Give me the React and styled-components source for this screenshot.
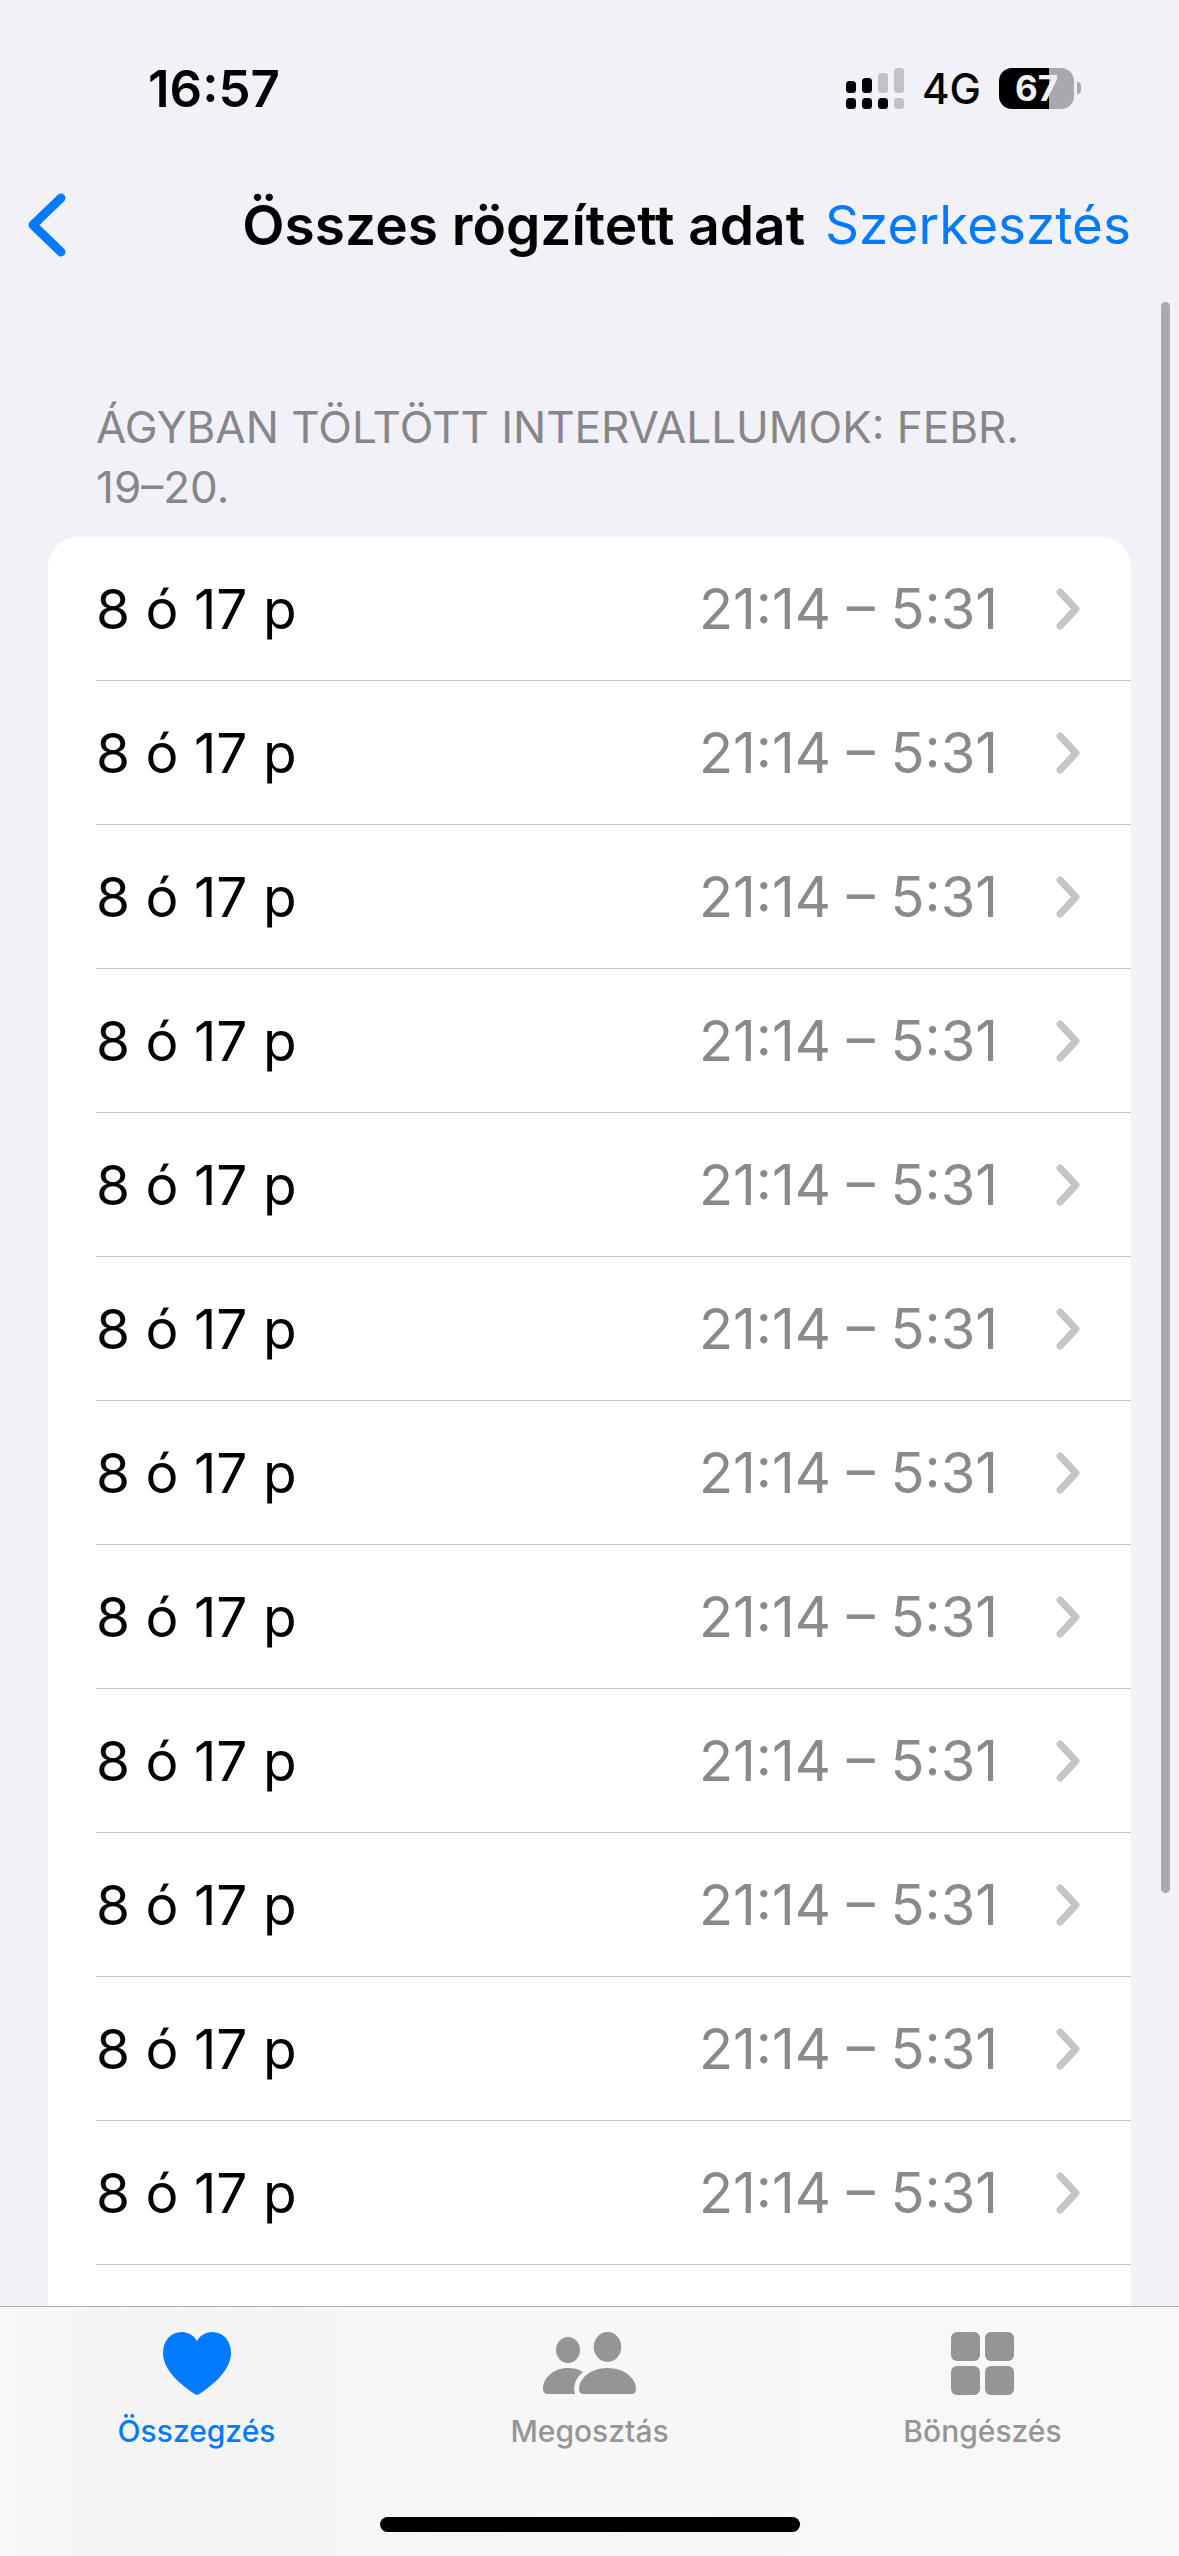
import styled, { createGlobalStyle } from 'styled-components';

const intervals = Array.from({ length: 12 }, (_, i) => ({
  id: i,
  duration: '8 ó 17 p',
  range: '21:14 – 5:31',
}));

const tabs = [
  { label: 'Összegzés', icon: HeartIcon, active: true },
  { label: 'Megosztás', icon: PeopleIcon },
  { label: 'Böngészés', icon: GridIcon },
];

export default function App() {
  return (
    <>
      <GlobalStyle />
      <Screen>
        <StatusBar>
          <Time>16:57</Time>
          <StatusIcons>
            <SignalIcon />
            <Network>4G</Network>
            <Battery>
              <BatteryBody>67</BatteryBody>
              <BatteryTip />
            </Battery>
          </StatusIcons>
        </StatusBar>

        <NavBar>
          <BackButton type="button" aria-label="Vissza">
            <BackIcon />
          </BackButton>
          <Title>Összes rögzített adat</Title>
          <EditButton type="button">Szerkesztés</EditButton>
        </NavBar>

        <Content>
          <SectionTitle>
            Ágyban töltött intervallumok: febr. <Days>19–20.</Days>
          </SectionTitle>
          <List>
            {intervals.map((interval) => (
              <Item key={interval.id}>
                <Row href="#">
                  <Duration>{interval.duration}</Duration>
                  <Range>{interval.range}</Range>
                  <ChevronIcon />
                </Row>
              </Item>
            ))}
          </List>
          <ScrollIndicator />
        </Content>

        <TabBar>
          <Tabs>
            {tabs.map(({ label, icon: Icon, active }) => (
              <Tab key={label} href="#" $active={active}>
                <Icon />
                {label}
              </Tab>
            ))}
          </Tabs>
          <HomeIndicator />
        </TabBar>
      </Screen>
    </>
  );
}

function SignalIcon() {
  return (
    <svg width="58" height="41" viewBox="0 0 58 41" aria-hidden="true">
      <g fill="#000">
        <rect x="0" y="13" width="10" height="12" rx="3.5" />
        <rect x="16" y="10" width="10" height="15" rx="3.5" />
        <rect x="0" y="30" width="10" height="11" rx="3.5" />
        <rect x="16" y="30" width="10" height="11" rx="3.5" />
        <rect x="32" y="30" width="10" height="11" rx="3.5" />
      </g>
      <g fill="#c2c1c7">
        <rect x="32" y="5" width="10" height="20" rx="3.5" />
        <rect x="48" y="0" width="10" height="25" rx="3.5" />
        <rect x="48" y="30" width="10" height="11" rx="3.5" />
      </g>
    </svg>
  );
}

function BackIcon() {
  return (
    <svg width="38" height="64" viewBox="0 0 38 64" fill="none" aria-hidden="true">
      <path d="M33 5 L5 32 L33 59" stroke="currentColor" strokeWidth="9" strokeLinecap="round" strokeLinejoin="round" />
    </svg>
  );
}

function ChevronIcon() {
  return (
    <svg width="24" height="42" viewBox="0 0 24 42" fill="none" aria-hidden="true">
      <path d="M4 4 L20 21 L4 38" stroke="#c5c5c7" strokeWidth="7" strokeLinecap="round" strokeLinejoin="round" />
    </svg>
  );
}

function HeartIcon() {
  return (
    <svg width="68" height="63" viewBox="0 0 68 63" fill="currentColor" aria-hidden="true">
      <path d="M34 63 C33 63 32 62 31 61.500 C12 49 0 35 0 21 C0 8.500 8 0 19 0 C25.500 0 31 3.500 34 9 C37 3.500 42.500 0 49 0 C60 0 68 8.500 68 21 C68 35 56 49 37 61.500 C36 62 35 63 34 63 Z" />
    </svg>
  );
}

function PeopleIcon() {
  return (
    <svg width="94" height="63" viewBox="0 0 94 63" fill="currentColor" aria-hidden="true">
      <ellipse cx="25" cy="18" rx="12" ry="13" />
      <ellipse cx="64.500" cy="15" rx="13.800" ry="15" />
      <path d="M5 62 C1.500 62 0 60 0 56.500 C0 46.500 10 36 25 36 C31 36 36 37.500 40 40 C32 46.500 30 54.500 32 62 Z" />
      <path d="M41 62 C37.500 62 36 60 36 57 C36 47 47 36 64.500 36 C82 36 93 47 93 57 C93 60 91.500 62 88 62 Z" />
    </svg>
  );
}

function GridIcon() {
  return (
    <svg width="63" height="63" viewBox="0 0 63 63" fill="currentColor" aria-hidden="true">
      <rect x="0" y="0" width="29" height="29" rx="6" />
      <rect x="34" y="0" width="29" height="29" rx="6" />
      <rect x="0" y="34" width="29" height="29" rx="6" />
      <rect x="34" y="34" width="29" height="29" rx="6" />
    </svg>
  );
}

const GlobalStyle = createGlobalStyle`
  * {
    box-sizing: border-box;
    margin: 0;
    padding: 0;
  }

  body {
    background-color: #f2f1f7;
    color: #000;
    font-family: Inter, "Liberation Sans", sans-serif;
  }

  button {
    border: none;
    background: none;
    font: inherit;
    cursor: pointer;
  }

  a {
    color: inherit;
    text-decoration: none;
  }

  svg {
    display: block;
    flex-shrink: 0;
  }
`

const Screen = styled.div`
  display: flex;
  flex-direction: column;
  height: 100vh;
  overflow: hidden;
`

const StatusBar = styled.div`
  display: flex;
  flex-shrink: 0;
  align-items: center;
  justify-content: space-between;
  height: 160px;
  padding: 16px 98px 0 148px;
`

const Time = styled.span`
  font-size: 51px;
  font-weight: 600;
`

const StatusIcons = styled.div`
  display: flex;
  align-items: center;
  gap: 18px;
`

const Network = styled.span`
  font-size: 42px;
  font-weight: 500;
`

const Battery = styled.div`
  display: flex;
  align-items: center;
  gap: 3px;
`

const BatteryBody = styled.span`
  width: 75px;
  border-radius: 13px;
  background: linear-gradient(90deg, #000 67%, #a9a8ad 67%);
  color: #f2f1f7;
  font-size: 35px;
  font-weight: 700;
  line-height: 41px;
  text-align: center;
`

const BatteryTip = styled.span`
  width: 4px;
  height: 12px;
  border-radius: 0 4px 4px 0;
  background-color: #a9a8ad;
`

const NavBar = styled.header`
  display: flex;
  flex-shrink: 0;
  align-items: center;
  height: 132px;
  padding: 0 48px 2px 28px;
`

const BackButton = styled.button`
  color: #007aff;
`

const Title = styled.h1`
  flex: 1;
  font-size: 55px;
  font-weight: 600;
  text-align: right;
  white-space: nowrap;
`

const EditButton = styled.button`
  margin-left: 20px;
  color: #007aff;
  font-size: 53px;
`

const Content = styled.main`
  position: relative;
  display: flex;
  flex: 1;
  flex-direction: column;
  min-height: 0;
  padding: 105px 48px 0;
  overflow: hidden;
`

const SectionTitle = styled.h2`
  padding: 0 48px 20px;
  color: #87868b;
  font-size: 44px;
  font-weight: 400;
  line-height: 60px;
  text-transform: uppercase;
`

const Days = styled.span`
  white-space: nowrap;
`

const List = styled.ul`
  flex: 1;
  border-radius: 30px 30px 0 0;
  background-color: #fff;
  list-style: none;
`

const Item = styled.li`
  padding-left: 48px;
`

const Row = styled.a`
  display: flex;
  align-items: center;
  height: 144px;
  padding-right: 51px;
  border-bottom: 1px solid #c6c6c8;
  font-size: 55px;
`

const Duration = styled.span`
  flex: 1;
`

const Range = styled.span`
  margin-right: 58px;
  color: #8a8a8e;
  font-size: 56px;
`

const ScrollIndicator = styled.div`
  position: absolute;
  top: 10px;
  right: 9px;
  width: 9px;
  height: 79%;
  border-radius: 5px;
  background-color: #aaa9ae;
`

const TabBar = styled.footer`
  display: flex;
  flex-shrink: 0;
  flex-direction: column;
  align-items: center;
  justify-content: space-between;
  height: 250px;
  padding: 25px 0 24px;
  border-top: 1px solid #adadb0;
  background: linear-gradient(90deg, #f8f8f8 0%, #f4f4f4 10%, #f5f5f5 26%, #f7f7f7 36%, #f8f8f8 100%);
`

const Tabs = styled.nav`
  display: flex;
  width: 100%;
`

const Tab = styled.a`
  display: flex;
  flex: 1;
  flex-direction: column;
  align-items: center;
  gap: 18px;
  color: ${({ $active }) => ($active ? '#007aff' : '#959595')};
  font-size: 30px;
  font-weight: 500;
  line-height: 36px;
`

const HomeIndicator = styled.div`
  width: 420px;
  height: 15px;
  border-radius: 8px;
  background-color: #000;
`
